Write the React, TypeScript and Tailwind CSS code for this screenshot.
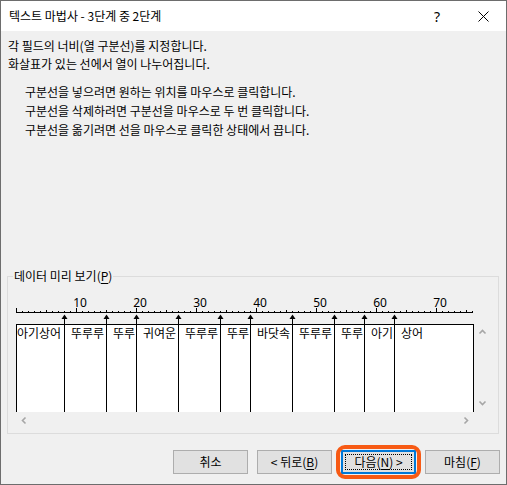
import type { ReactNode } from 'react'

const BREAKS = [8, 15, 20, 27, 34, 39, 46, 53, 58, 63]

const COLUMNS: { cols: number; text: string; lead: boolean }[] = [
  { cols: 8, text: '아기상어', lead: false },
  { cols: 7, text: '뚜루루', lead: true },
  { cols: 5, text: '뚜루', lead: true },
  { cols: 7, text: '귀여운', lead: true },
  { cols: 7, text: '뚜루루', lead: true },
  { cols: 5, text: '뚜루', lead: true },
  { cols: 7, text: '바닷속', lead: true },
  { cols: 7, text: '뚜루루', lead: true },
  { cols: 5, text: '뚜루', lead: true },
  { cols: 5, text: '아기', lead: true },
  { cols: 13, text: '상어', lead: true },
]

function Ruler() {
  const ticks = Array.from({ length: 77 }, (_, c) => c)
  return (
    <svg width="458" height="30" className="block">
      <rect x="0" y="18" width="457" height="1" fill="#000" />
      {ticks.map((c) => {
        const h = c % 10 === 0 ? 4 : c % 5 === 0 ? 2 : 1
        return <rect key={c} x={6 * c} y={18 - h} width="1" height={h} fill="#000" />
      })}
      {[1, 2, 3, 4, 5, 6, 7].map((n) => (
        <text
          key={n}
          x={60 * n + 4}
          y="13"
          fontSize="12"
          textAnchor="middle"
          fill="#000"
          fontFamily="'Noto Sans', sans-serif"
        >
          {n * 10}
        </text>
      ))}
      {BREAKS.map((b) => (
        <g key={b}>
          <polygon points={`${6 * b + 0.5},20.5 ${6 * b - 2.5},25 ${6 * b + 3.5},25`} fill="#000" />
          <rect x={6 * b} y="22" width="1" height="8" fill="#000" />
        </g>
      ))}
    </svg>
  )
}

function Chevron({ dir }: { dir: 'up' | 'down' | 'left' | 'right' }) {
  const d = {
    up: 'M1.5 5.5 L4.5 2.5 L7.5 5.5',
    down: 'M1.5 2.5 L4.5 5.5 L7.5 2.5',
    left: 'M5.5 1.5 L2.5 4.5 L5.5 7.5',
    right: 'M2.5 1.5 L5.5 4.5 L2.5 7.5',
  }[dir]
  return (
    <svg width="9" height="9" viewBox="0 0 9 9" className="block">
      <path d={d} fill="none" stroke="#a6a6a6" strokeWidth="1.6" />
    </svg>
  )
}

function Mnemonic({ children }: { children: ReactNode }) {
  return <span className="underline underline-offset-2">{children}</span>
}

function Button({ children, isDefault }: { children: ReactNode; isDefault?: boolean }) {
  return (
    <button
      className={
        isDefault
          ? 'w-[75px] h-[24px] bg-[#e1e1e1] border-2 border-[#0078d7] outline-1 outline-dotted outline-black outline-offset-[-5px] text-[12px] leading-none text-black flex items-center justify-center'
          : 'w-[75px] h-[24px] bg-[#e1e1e1] border border-[#adadad] text-[12px] leading-none text-black flex items-center justify-center'
      }
    >
      {children}
    </button>
  )
}

export default function App() {
  return (
    <div className="w-[507px] h-[485px] border border-[#6d6d6d] bg-[#f0f0f0] flex flex-col font-['Noto_Sans_CJK_KR','Noto_Sans',sans-serif] text-black overflow-hidden">
      {/* Title bar */}
      <div className="h-[30px] bg-white flex items-center shrink-0">
        <span className="pl-[8px] text-[12px] leading-[16px] flex-1">텍스트 마법사 - 3단계 중 2단계</span>
        <div className="w-[46px] h-[30px] flex items-center justify-center text-[14px] font-['Noto_Sans',sans-serif]">
          ?
        </div>
        <div className="w-[46px] h-[30px] flex items-center justify-center">
          <svg width="11" height="11" viewBox="0 0 11 11">
            <path d="M0.5 0.5 L10.5 10.5 M10.5 0.5 L0.5 10.5" stroke="#000" strokeWidth="1" />
          </svg>
        </div>
      </div>

      {/* Body */}
      <div className="flex-1 flex flex-col px-[6px] pt-[6px]">
        <div className="pl-[1px] text-[12px] leading-[18px]">
          <p>각 필드의 너비(열 구분선)를 지정합니다.</p>
          <p>화살표가 있는 선에서 열이 나누어집니다.</p>
        </div>
        <div className="pl-[18px] mt-[9px] text-[12px] leading-[19px]">
          <p>구분선을 넣으려면 원하는 위치를 마우스로 클릭합니다.</p>
          <p>구분선을 삭제하려면 구분선을 마우스로 두 번 클릭합니다.</p>
          <p>구분선을 옮기려면 선을 마우스로 클릭한 상태에서 끕니다.</p>
        </div>

        {/* Data preview group */}
        <fieldset className="mt-[129px] w-[492px] border border-[#dcdcdc] pb-[4px]">
          <legend className="ml-[5px] px-[1px] text-[12px] leading-[16px]">
            데이터 미리 보기(<Mnemonic>P</Mnemonic>)
          </legend>
          <div className="ml-[8px] mt-[10px] flex flex-col">
            <Ruler />
            <div className="flex">
              <div className="w-[458px] h-[88px] bg-white border-t border-x border-black flex">
                {COLUMNS.map((col, i) => (
                  <div
                    key={i}
                    style={{ width: col.cols * 6 }}
                    className={
                      i === COLUMNS.length - 1
                        ? 'shrink-0 h-full pt-[1px] text-[12px] leading-[14px] whitespace-nowrap'
                        : 'shrink-0 h-full pt-[1px] text-[12px] leading-[14px] whitespace-nowrap border-r border-black'
                    }
                  >
                    <span className={col.lead ? 'pl-[6px]' : ''}>{col.text}</span>
                  </div>
                ))}
              </div>
              <div className="w-[17px] h-[88px] flex flex-col items-center justify-between py-[4px]">
                <Chevron dir="up" />
                <Chevron dir="down" />
              </div>
            </div>
            <div className="w-[458px] h-[17px] flex items-center justify-between pl-[4px] pr-[3px]">
              <Chevron dir="left" />
              <Chevron dir="right" />
            </div>
          </div>
        </fieldset>

        {/* Buttons */}
        <div className="mt-[16px] flex justify-end gap-[9px]">
          <Button>취소</Button>
          <Button>
            &lt; 뒤로(<Mnemonic>B</Mnemonic>)
          </Button>
          <div className="relative">
            <Button isDefault>
              다음(<Mnemonic>N</Mnemonic>) &gt;
            </Button>
            <div className="absolute -inset-[5px] border-4 border-[#f75a14] rounded-[9px] pointer-events-none" />
          </div>
          <Button>
            마침(<Mnemonic>F</Mnemonic>)
          </Button>
        </div>
      </div>
    </div>
  )
}
